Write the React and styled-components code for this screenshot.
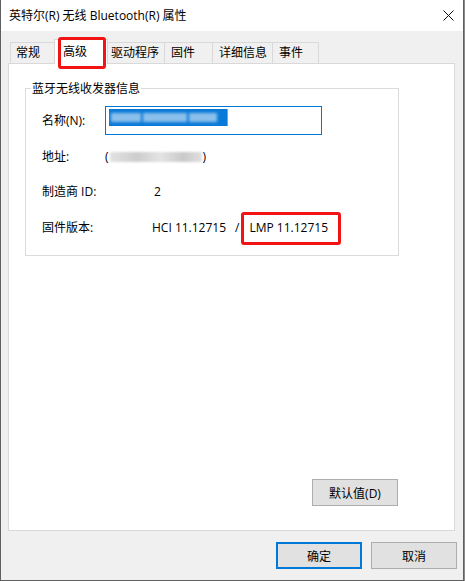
import React from 'react';
import styled, { createGlobalStyle } from 'styled-components';

const GlobalStyle = createGlobalStyle`
  html, body {
    margin: 0;
    padding: 0;
    background: #8a8a8a;
  }
  body {
    font-family: "Open Sans", "Noto Sans CJK SC", sans-serif;
    font-size: 12px;
    color: #000;
  }
`;

const tabs = [
  { label: '常规', width: 46, pad: 5 },
  { label: '高级', width: 54, pad: 8, active: true },
  { label: '驱动程序', width: 58, pad: 3 },
  { label: '固件', width: 49, pad: 6 },
  { label: '详细信息', width: 61, pad: 6 },
  { label: '事件', width: 47, pad: 6 },
];

const App = () => {
  return (
    <>
      <GlobalStyle />
      <Window>
        <TitleBar>
          <Title>英特尔(R) 无线 Bluetooth(R) 属性</Title>
          <CloseIcon width="11" height="11" viewBox="0 0 11 11">
            <path d="M0.5 0.5 L10.5 10.5 M10.5 0.5 L0.5 10.5" stroke="#111" strokeWidth="1" />
          </CloseIcon>
        </TitleBar>

        <Body>
          <TabStrip>
            {tabs.map((t) => (
              <Tab key={t.label} $width={t.width} $pad={t.pad} $active={t.active}>
                {t.label}
              </Tab>
            ))}
          </TabStrip>

          <Panel>
            <GroupBox>
              <Legend>蓝牙无线收发器信息</Legend>

              <Label>名称(N):</Label>
              <Value>
                <NameInput>
                  <Selection>
                    <Smudge $w={30} />
                    <Smudge $w={44} />
                    <Smudge $w={28} />
                  </Selection>
                  <Caret />
                </NameInput>
              </Value>

              <Label>地址:</Label>
              <Value>
                (<Blur />)
              </Value>

              <Label>制造商 ID:</Label>
              <Value $indent={49}>2</Value>

              <Label>固件版本:</Label>
              <Value $indent={47}>
                HCI 11.12715
                <Slash>/</Slash>
                <Marked>LMP 11.12715</Marked>
              </Value>
            </GroupBox>

            <PanelFooter>
              <Button>默认值(D)</Button>
            </PanelFooter>
          </Panel>

          <ButtonRow>
            <Button $primary>确定</Button>
            <Button>取消</Button>
          </ButtonRow>
        </Body>
      </Window>
    </>
  );
};

const Window = styled.div`
  width: 464px;
  height: 581px;
  box-sizing: border-box;
  border: 1px solid #5f5f5f;
  border-top: none;
  display: flex;
  flex-direction: column;
  background: #f0f0f0;
`;

const TitleBar = styled.div`
  height: 31px;
  flex: none;
  background: #fff;
  display: flex;
  align-items: center;
  justify-content: space-between;
  padding: 0 9px 0 8px;
`;

const Title = styled.div`
  font-size: 12px;
  line-height: 16px;
`;

const CloseIcon = styled.svg`
  display: block;
`;

const Body = styled.div`
  flex: 1;
  display: flex;
  flex-direction: column;
  padding: 9px 8px 11px 7px;
`;

const TabStrip = styled.div`
  height: 23px;
  display: flex;
  align-items: flex-end;
  padding-left: 2px;
  position: relative;
  z-index: 1;
`;

const Tab = styled.div`
  position: relative;
  box-sizing: border-box;
  width: ${(p) => p.$width}px;
  height: ${(p) => (p.$active ? 25 : 21)}px;
  margin: ${(p) => (p.$active ? '0 -1px -1px -1px' : '0 -1px 0 0')};
  border: 1px solid #d9d9d9;
  border-bottom: none;
  background: ${(p) => (p.$active ? '#fff' : '#f0f0f0')};
  z-index: ${(p) => (p.$active ? 2 : 0)};
  padding: ${(p) => (p.$active ? '4px' : '2px')} 0 0 ${(p) => p.$pad}px;
  line-height: 16px;
  white-space: nowrap;

  &::after {
    content: '';
    display: ${(p) => (p.$active ? 'block' : 'none')};
    position: absolute;
    left: 3px;
    top: -3px;
    width: 48px;
    height: 32px;
    box-sizing: border-box;
    border: 3px solid #f21414;
    border-radius: 3px;
  }
`;

const Panel = styled.div`
  flex: 1;
  background: #fff;
  border: 1px solid #d9d9d9;
  display: flex;
  flex-direction: column;
  padding: 24px 0 0 16px;
`;

const GroupBox = styled.div`
  position: relative;
  width: 374px;
  box-sizing: border-box;
  border: 1px solid #dcdcdc;
  display: grid;
  grid-template-columns: 63px 1fr;
  grid-template-rows: 29px 44px 26px 46px;
  align-items: center;
  padding: 17px 0 4px 16px;
`;

const Legend = styled.div`
  position: absolute;
  left: 5px;
  top: -8px;
  padding: 0 1px;
  background: #fff;
  line-height: 16px;
`;

const Label = styled.div`
  line-height: 16px;
  white-space: nowrap;
`;

const Value = styled.div`
  display: flex;
  align-items: center;
  padding-left: ${(p) => p.$indent || 0}px;
  line-height: 16px;
  white-space: nowrap;
`;

const NameInput = styled.div`
  width: 217px;
  height: 29px;
  box-sizing: border-box;
  border: 1px solid #0078d7;
  display: flex;
  align-items: flex-start;
  padding: 2px 0 0 3px;
`;

const Selection = styled.div`
  width: 118px;
  height: 17px;
  background: #0a7ad8;
  display: flex;
  align-items: center;
  gap: 2px;
  padding: 0 2px;
  box-sizing: border-box;
`;

const Smudge = styled.span`
  display: block;
  width: ${(p) => p.$w}px;
  height: 9px;
  background: #8cc0ec;
  filter: blur(1.5px);
`;

const Caret = styled.span`
  width: 1px;
  height: 17px;
  background: #e98a3a;
`;

const Blur = styled.span`
  display: inline-block;
  width: 92px;
  height: 10px;
  margin: 0 1px;
  background: linear-gradient(90deg, #e2e2e2, #cdcdcd 30%, #e4e4e4 55%, #c9c9c9 80%, #e0e0e0);
  filter: blur(1px);
`;

const Slash = styled.span`
  margin: 0 2px 0 9px;
`;

const Marked = styled.span`
  display: inline-flex;
  align-items: center;
  height: 33px;
  box-sizing: border-box;
  border: 3px solid #f21414;
  border-radius: 3px;
  padding: 0 10px 0 5px;
`;

const PanelFooter = styled.div`
  margin-top: auto;
  display: flex;
  justify-content: flex-end;
  padding: 0 56px 24px 0;
`;

const Button = styled.button`
  width: 86px;
  height: 27px;
  box-sizing: border-box;
  font-family: inherit;
  font-size: 12px;
  color: #000;
  background: #e1e1e1;
  border: ${(p) => (p.$primary ? '2px solid #0078d7' : '1px solid #adadad')};
  border-radius: 0;
  padding: 0;
`;

const ButtonRow = styled.div`
  margin: 11px -2px 0 0;
  display: flex;
  justify-content: flex-end;
  gap: 9px;
`;

export default App;
